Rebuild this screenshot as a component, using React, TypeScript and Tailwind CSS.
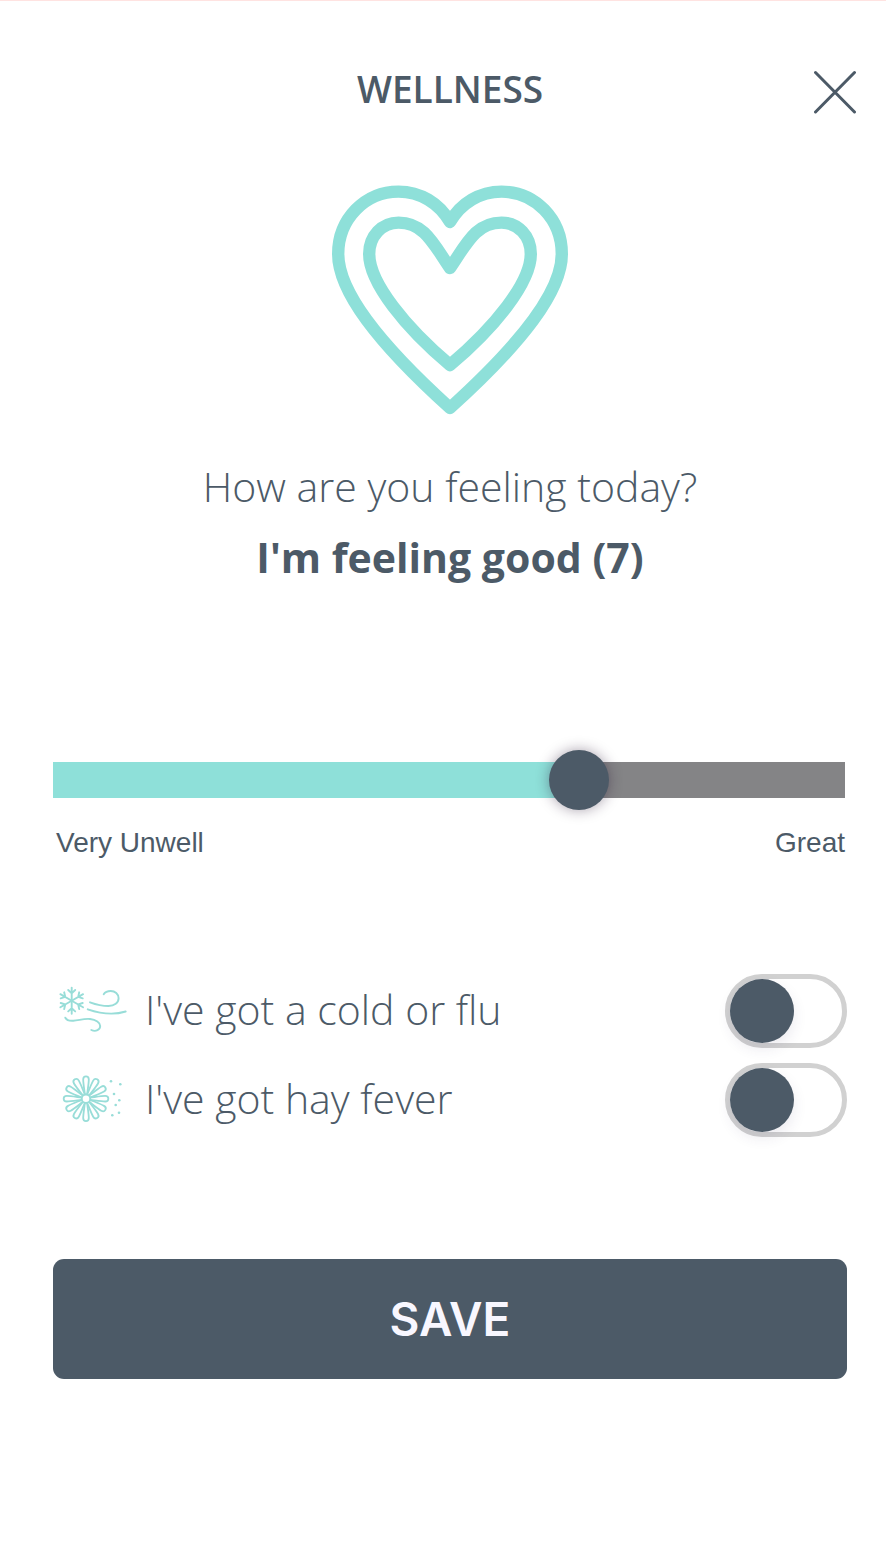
import { useState, type CSSProperties, type ReactNode } from 'react';

const MOODS = [
  'terrible',
  'very unwell',
  'unwell',
  'poorly',
  'so-so',
  'okay',
  'good',
  'very good',
  'really well',
  'great',
];

const MIN = 1;
const MAX = 10;

function HeartIcon() {
  return (
    <svg
      viewBox="0 0 236 230"
      className="h-[230px] w-[236px]"
      fill="none"
      stroke="#8ee0d9"
      strokeWidth="12.4"
      strokeLinecap="round"
      strokeLinejoin="round"
      aria-hidden="true"
    >
      <path d="M118 37C107 18 88 6.6 66.5 6.6C33 6.6 6.2 34 6.2 69C6.2 106 45 157 118 223C191 157 229.8 106 229.8 69C229.8 34 203 6.6 169.5 6.6C148 6.6 129 18 118 37Z" />
      <path d="M118 83C101 58 92 37.6 66.5 37.6C50 37.6 37.2 51 37.2 69C37.2 98 74 143 118 180C162 143 198.8 98 198.8 69C198.8 51 186 37.6 169.5 37.6C144 37.6 135 58 118 83Z" />
    </svg>
  );
}

function ColdIcon() {
  return (
    <svg
      viewBox="0 0 75 74"
      className="h-[74px] w-[75px]"
      fill="none"
      stroke="#98ddd8"
      strokeWidth="1.9"
      strokeLinecap="round"
      strokeLinejoin="round"
      aria-hidden="true"
    >
      {[0, 60, 120, 180, 240, 300].map((angle) => (
        <path
          key={angle}
          d="M18.7 26.7V13.6M15.2 16L18.7 19.2L22.2 16"
          transform={`rotate(${angle} 18.7 26.7)`}
        />
      ))}
      <path d="M37 28.3C43 30.5 49 32 55.5 32C61.5 32 65.6 28.8 65.6 24.3C65.6 20 62 17 57.7 17C54.5 17 52 18.2 50.7 20.3" />
      <path d="M34.7 35.3C47 39.5 60 41.5 72.7 37.5" />
      <path d="M12.3 43.7C13.5 46 16 47 20.3 46.7C26 46.3 31 44.4 37 45C43 45.6 47.2 48.5 47.2 52C47.2 55.5 43 58.3 38.3 56" />
    </svg>
  );
}

function HayFeverIcon() {
  return (
    <svg
      viewBox="0 0 75 74"
      className="h-[74px] w-[75px]"
      fill="none"
      stroke="#98ddd8"
      strokeWidth="1.8"
      strokeLinejoin="round"
      aria-hidden="true"
    >
      <circle cx="33" cy="35.7" r="4.2" />
      {[0, 30, 60, 90, 120, 150, 180, 210, 240, 270, 300, 330].map((angle) => (
        <path
          key={angle}
          d="M31.9 31.5C31.2 26 30.2 20 30.2 16.5C30.2 12.3 35.8 12.3 35.8 16.5C35.8 20 34.8 26 34.1 31.5"
          transform={`rotate(${angle} 33 35.7)`}
        />
      ))}
      <g fill="#98ddd8" stroke="none">
        <circle cx="58" cy="18.3" r="1.3" />
        <circle cx="67.3" cy="21.3" r="1.3" />
        <circle cx="61" cy="31" r="1.3" />
        <circle cx="66.3" cy="37.3" r="1.3" />
        <circle cx="62.7" cy="42" r="1.3" />
        <circle cx="66" cy="49.7" r="1.3" />
        <circle cx="59.3" cy="52.3" r="1.3" />
      </g>
    </svg>
  );
}

function SymptomToggle({ icon, label }: { icon: ReactNode; label: string }) {
  const [checked, setChecked] = useState(false);

  return (
    <label className="flex cursor-pointer items-center justify-between">
      <span className="flex gap-[17px]">
        {icon}
        <span className="text-[41px] leading-[71px] font-light">{label}</span>
      </span>
      <input
        type="checkbox"
        role="switch"
        checked={checked}
        onChange={(e) => setChecked(e.target.checked)}
        className="h-[74px] w-[122px] shrink-0 cursor-pointer appearance-none rounded-full border-[5px] border-[#d1d1d1] before:block before:size-16 before:rounded-full before:bg-[#4c5a67] before:shadow-[0_6px_14px_rgba(60,50,100,0.1)] before:transition-transform checked:border-[#8ee0d9] checked:before:translate-x-12"
      />
    </label>
  );
}

export default function App() {
  const [value, setValue] = useState(7.1);
  const score = Math.round(value);
  const fill = { '--fill': `${((value - MIN) / (MAX - MIN)) * 100}%` } as CSSProperties;

  return (
    <div className="min-h-screen border-t border-[#ffe3e1] bg-white font-['Open_Sans',sans-serif] text-[#4c5a67]">
      <header className="grid grid-cols-[44px_1fr_44px] pt-[69px] pr-[29px] pl-[43px]">
        <h1 className="col-start-2 text-center text-[37px] leading-[38px] font-semibold">
          WELLNESS
        </h1>
        <button type="button" aria-label="Close" className="size-11 cursor-pointer">
          <svg
            viewBox="0 0 44 44"
            className="size-11"
            stroke="currentColor"
            strokeWidth="3"
            strokeLinecap="round"
          >
            <path d="M2.5 2.5L41.5 42M41.5 2.5L2.5 42" />
          </svg>
        </button>
      </header>

      <main className="flex flex-col pr-[39px] pb-16 pl-[53px]">
        <div className="mt-[71px] flex justify-center">
          <HeartIcon />
        </div>

        <div className="mt-9 text-center text-[41px] leading-[71px]">
          <label htmlFor="feeling" className="block font-light">
            How are you feeling today?
          </label>
          <p className="font-bold">
            I'm feeling {MOODS[score - 1]} ({score})
          </p>
        </div>

        <div className="mt-[157px] pr-0.5">
          <input
            id="feeling"
            type="range"
            min={MIN}
            max={MAX}
            step={0.1}
            value={value}
            onChange={(e) => setValue(Number(e.target.value))}
            style={fill}
            className="block h-[60px] w-full cursor-pointer appearance-none bg-transparent [&::-webkit-slider-runnable-track]:h-9 [&::-webkit-slider-runnable-track]:bg-[linear-gradient(to_right,#8ee0d9_var(--fill),#848486_var(--fill))] [&::-webkit-slider-thumb]:-mt-3 [&::-webkit-slider-thumb]:size-[60px] [&::-webkit-slider-thumb]:appearance-none [&::-webkit-slider-thumb]:rounded-full [&::-webkit-slider-thumb]:bg-[#4c5a67] [&::-webkit-slider-thumb]:shadow-[0_0_14px_rgba(40,20,50,0.4)]"
          />
          <div className="mt-[13px] flex justify-between pl-[3px] font-['Liberation_Sans',sans-serif] text-[28px] leading-[40px]">
            <span>Very Unwell</span>
            <span>Great</span>
          </div>
        </div>

        <div className="mt-[111px] flex flex-col gap-[15px]">
          <SymptomToggle icon={<ColdIcon />} label="I've got a cold or flu" />
          <SymptomToggle icon={<HayFeverIcon />} label="I've got hay fever" />
        </div>

        <button
          type="button"
          className="mt-[122px] h-[120px] cursor-pointer rounded-[11px] bg-[#4c5a67] font-['Inter',sans-serif] text-[46px] font-semibold text-[#f8f7ff]"
        >
          SAVE
        </button>
      </main>
    </div>
  );
}
